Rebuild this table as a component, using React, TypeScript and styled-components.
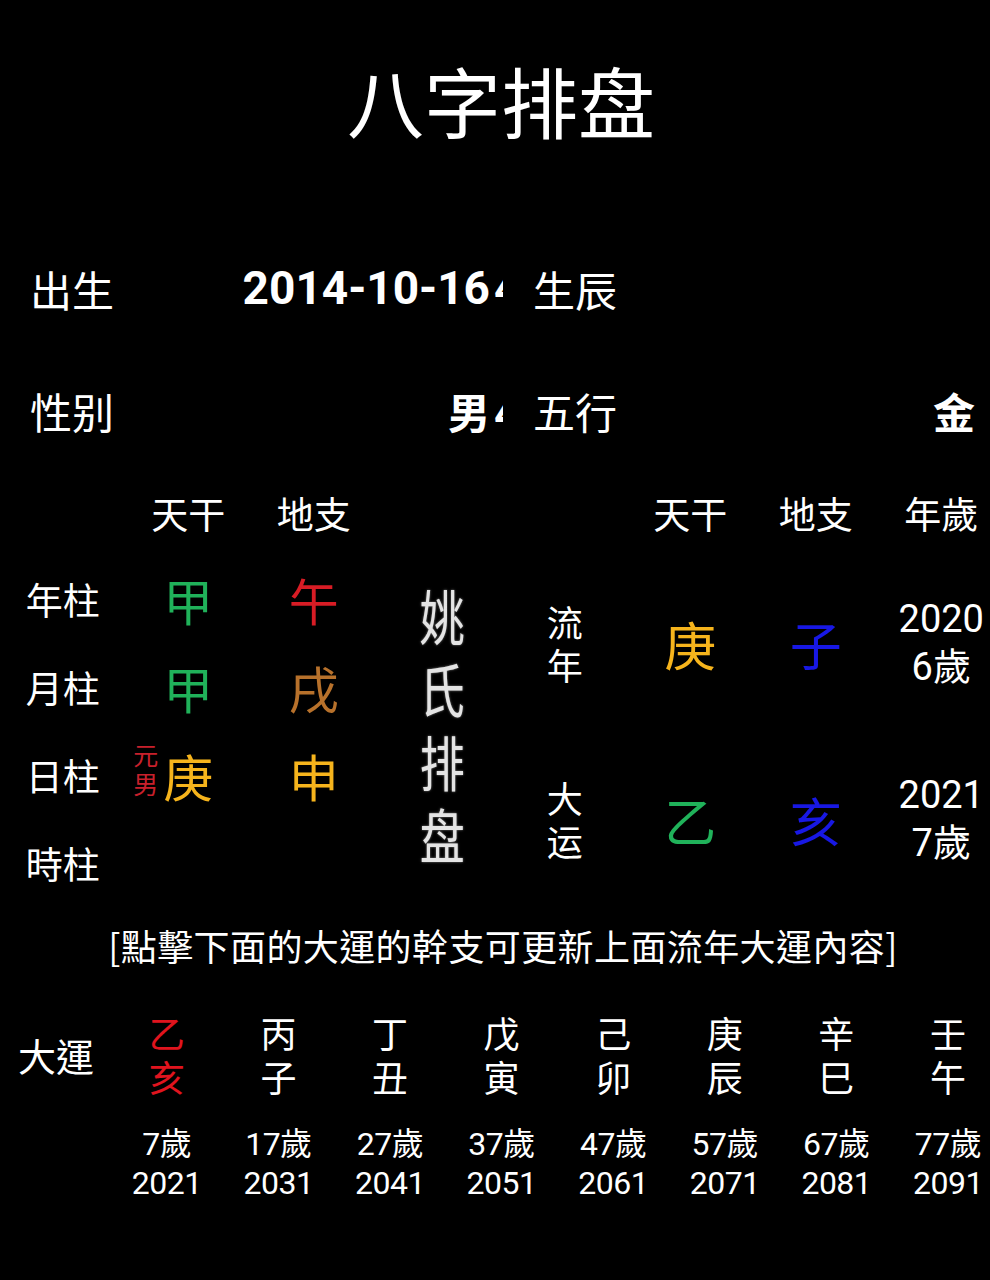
import React from "react";
import styled, { createGlobalStyle } from "styled-components";

const Global = createGlobalStyle`
  html, body { margin: 0; padding: 0; background: #000; }
  body {
    overflow: hidden;
    color: #fff;
    font-family: "Noto Sans CJK SC", "Noto Sans CJK TC", sans-serif;
  }
`;

const Page = styled.div`
  width: 990px;
  min-height: 1280px;
  background: #000;
  overflow: hidden;
`;

const Title = styled.h1`
  margin: 0;
  height: 208px;
  box-sizing: border-box;
  padding: 0 0 10px 12px;
  display: flex;
  align-items: center;
  justify-content: center;
  font-size: 77px;
  font-weight: 400;
`;

const InfoSection = styled.section`
  margin-top: 19px;
  display: flex;
  flex-direction: column;
`;

const InfoRow = styled.div`
  height: 122px;
  display: grid;
  grid-template-columns: 473px 1fr;
  column-gap: 30px;
  padding: 0 15px 0 30px;
  align-items: center;
`;

const Pair = styled.div`
  display: flex;
  align-items: center;
  justify-content: space-between;
`;

const InfoLabel = styled.span`
  font-size: 42px;
  font-weight: 400;
  white-space: nowrap;
`;

const InfoValue = styled.span`
  font-family: Roboto, "Noto Sans CJK SC", sans-serif;
  font-size: 46px;
  font-weight: 700;
  white-space: nowrap;
  display: inline-flex;
  align-items: baseline;
`;

const CjkBold = styled.span`
  font-family: "Noto Sans CJK SC", sans-serif;
  font-size: 42px;
  font-weight: 700;
`;

const Clipped = styled.span`
  display: inline-block;
  width: 9px;
  overflow: hidden;
  margin-left: 4px;
  font-family: Roboto, sans-serif;
  font-weight: 700;
  font-size: 46px;
  line-height: 1;
`;

const Board = styled.section`
  display: grid;
  grid-template-columns: repeat(8, 125.5px);
  grid-template-rows: 84px 176px 176px;
`;

const Head = styled.div<{ $col: number }>`
  grid-column: ${(p) => p.$col};
  grid-row: 1;
  display: flex;
  align-items: center;
  justify-content: center;
  font-size: 37px;
`;

const Pillars = styled.div`
  grid-column: 1 / span 3;
  grid-row: 2 / span 2;
  display: grid;
  grid-template-columns: repeat(3, 125.5px);
  grid-auto-rows: 88px;
`;

const RowLabel = styled.div`
  display: flex;
  align-items: center;
  justify-content: center;
  font-size: 37px;
`;

const Glyph = styled.div<{ $color: string; $size?: number }>`
  position: relative;
  display: flex;
  align-items: center;
  justify-content: center;
  font-size: ${(p) => p.$size ?? 50}px;
  color: ${(p) => p.$color};
`;

const Tag = styled.span`
  position: absolute;
  right: calc(50% + 30px);
  top: 50%;
  transform: translateY(-60%);
  display: flex;
  flex-direction: column;
  font-size: 25px;
  line-height: 29px;
  color: #c8202c;
`;

const Brand = styled.div`
  grid-column: 4;
  grid-row: 2 / span 2;
  display: flex;
  flex-direction: column;
  align-items: center;
  justify-content: center;
  padding: 0 0 14px 6px;
  color: #e4e4e4;
  text-shadow: 0 0 2px rgba(255, 255, 255, 0.55);
`;

const BrandChar = styled.span`
  display: block;
  height: 73px;
  line-height: 73px;
  font-size: 45px;
  transform: scaleY(1.32);
`;

const Fortune = styled.div<{ $row: number }>`
  grid-column: 5 / span 4;
  grid-row: ${(p) => p.$row};
  display: grid;
  grid-template-columns: repeat(4, 125.5px);
  align-items: center;
`;

const StackLabel = styled.div`
  display: flex;
  flex-direction: column;
  align-items: center;
  font-size: 36px;
  line-height: 43px;
`;

const AgeStack = styled.div`
  display: flex;
  flex-direction: column;
  align-items: center;
  font-family: Roboto, "Noto Sans CJK TC", sans-serif;
  font-size: 38px;
  line-height: 48px;
`;

const Notice = styled.p`
  margin: 0;
  height: 76px;
  display: flex;
  align-items: center;
  justify-content: center;
  font-family: "Noto Sans CJK TC", sans-serif;
  font-size: 36px;
  letter-spacing: 0.4px;
  padding-left: 16px;
`;

const LuckGrid = styled.section`
  margin-top: 27px;
  display: grid;
  grid-template-columns: 111px repeat(8, 111.6px);
  grid-template-rows: 88px 79px;
  row-gap: 26px;
`;

const LuckLabel = styled.div`
  grid-row: 1;
  display: flex;
  align-items: center;
  padding-left: 18px;
  font-family: "Noto Sans CJK TC", sans-serif;
  font-size: 38px;
`;

const LuckPair = styled.div<{ $active?: boolean }>`
  grid-row: 1;
  display: flex;
  flex-direction: column;
  align-items: center;
  justify-content: center;
  font-family: "Noto Sans CJK TC", sans-serif;
  font-size: 36px;
  line-height: 44px;
  color: ${(p) => (p.$active ? "#e0141e" : "#fff")};
`;

const LuckAge = styled.div<{ $col: number }>`
  grid-row: 2;
  grid-column: ${(p) => p.$col};
  display: flex;
  flex-direction: column;
  align-items: center;
  justify-content: center;
  font-family: Roboto, "Noto Sans CJK TC", sans-serif;
  font-size: 32px;
  line-height: 39px;
  letter-spacing: -0.5px;
`;

const GREEN = "#20b25a";
const RED = "#d81c25";
const BROWN = "#b7712b";
const YELLOW = "#f6b41c";
const BLUE = "#1818e4";

const pillars = [
  { label: "年柱", stem: "甲", stemColor: GREEN, branch: "午", branchColor: RED },
  { label: "月柱", stem: "甲", stemColor: GREEN, branch: "戌", branchColor: BROWN },
  { label: "日柱", stem: "庚", stemColor: YELLOW, branch: "申", branchColor: YELLOW, tag: true },
  { label: "時柱", stem: "", stemColor: "#fff", branch: "", branchColor: "#fff" },
];

const luck = [
  ["乙", "亥", "7歲", "2021"],
  ["丙", "子", "17歲", "2031"],
  ["丁", "丑", "27歲", "2041"],
  ["戊", "寅", "37歲", "2051"],
  ["己", "卯", "47歲", "2061"],
  ["庚", "辰", "57歲", "2071"],
  ["辛", "巳", "67歲", "2081"],
  ["壬", "午", "77歲", "2091"],
];

export default function App() {
  return (
    <Page>
      <Global />
      <Title>八字排盘</Title>

      <InfoSection>
        <InfoRow>
          <Pair>
            <InfoLabel>出生</InfoLabel>
            <InfoValue>
              2014-10-16<Clipped>4</Clipped>
            </InfoValue>
          </Pair>
          <Pair>
            <InfoLabel>生辰</InfoLabel>
            <span />
          </Pair>
        </InfoRow>
        <InfoRow>
          <Pair>
            <InfoLabel>性别</InfoLabel>
            <InfoValue>
              <CjkBold>男</CjkBold>
              <Clipped>4</Clipped>
            </InfoValue>
          </Pair>
          <Pair>
            <InfoLabel>五行</InfoLabel>
            <CjkBold>金</CjkBold>
          </Pair>
        </InfoRow>
      </InfoSection>

      <Board>
        <Head $col={2}>天干</Head>
        <Head $col={3}>地支</Head>
        <Head $col={6}>天干</Head>
        <Head $col={7}>地支</Head>
        <Head $col={8}>年歲</Head>

        <Pillars>
          {pillars.map((p) => (
            <React.Fragment key={p.label}>
              <RowLabel>{p.label}</RowLabel>
              <Glyph $color={p.stemColor}>
                {p.tag && (
                  <Tag>
                    <span>元</span>
                    <span>男</span>
                  </Tag>
                )}
                {p.stem}
              </Glyph>
              <Glyph $color={p.branchColor}>{p.branch}</Glyph>
            </React.Fragment>
          ))}
        </Pillars>

        <Brand>
          <BrandChar>姚</BrandChar>
          <BrandChar>氏</BrandChar>
          <BrandChar>排</BrandChar>
          <BrandChar>盘</BrandChar>
        </Brand>

        <Fortune $row={2}>
          <StackLabel>
            <span>流</span>
            <span>年</span>
          </StackLabel>
          <Glyph $color={YELLOW} $size={52}>庚</Glyph>
          <Glyph $color={BLUE} $size={52}>子</Glyph>
          <AgeStack>
            <span>2020</span>
            <span>6歲</span>
          </AgeStack>
        </Fortune>

        <Fortune $row={3}>
          <StackLabel>
            <span>大</span>
            <span>运</span>
          </StackLabel>
          <Glyph $color={GREEN} $size={52}>乙</Glyph>
          <Glyph $color={BLUE} $size={52}>亥</Glyph>
          <AgeStack>
            <span>2021</span>
            <span>7歲</span>
          </AgeStack>
        </Fortune>
      </Board>

      <Notice>[點擊下面的大運的幹支可更新上面流年大運內容]</Notice>

      <LuckGrid>
        <LuckLabel>大運</LuckLabel>
        {luck.map(([s, b], i) => (
          <LuckPair key={i} $active={i === 0}>
            <span>{s}</span>
            <span>{b}</span>
          </LuckPair>
        ))}
        {luck.map(([, , age, year], i) => (
          <LuckAge key={i} $col={i + 2}>
            <span>{age}</span>
            <span>{year}</span>
          </LuckAge>
        ))}
      </LuckGrid>
    </Page>
  );
}
